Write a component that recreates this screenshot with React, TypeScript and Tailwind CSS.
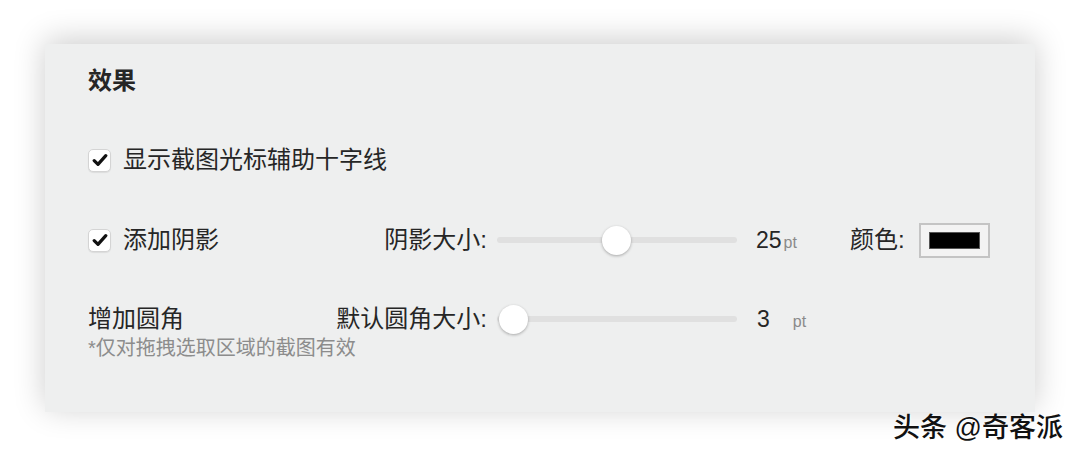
import React from 'react';

const font = { fontFamily: '"Liberation Sans", "Noto Sans CJK SC", sans-serif' };

function Checkbox() {
  return (
    <div className="w-[23px] h-[23px] rounded-[5px] bg-white border border-[#d4d4d4] shadow-[0_1px_1px_rgba(0,0,0,0.08)] flex items-center justify-center">
      <svg width="16" height="14" viewBox="0 0 16 14" fill="none">
        <path d="M2.2 7.6 L6 11.4 L13.8 2.6" stroke="#111" strokeWidth="3.2" strokeLinecap="round" strokeLinejoin="round" />
      </svg>
    </div>
  );
}

function Slider({ pos }: { pos: number }) {
  return (
    <div className="relative w-[240px] h-[28px] flex items-center">
      <div className="w-full h-[6px] rounded-full bg-[#e0e0e0]" />
      <div
        className="absolute top-0 w-[29px] h-[29px] -ml-[14px] rounded-full bg-white shadow-[0_1px_3px_rgba(0,0,0,0.3)]"
        style={{ left: pos }}
      />
    </div>
  );
}

export default function App() {
  return (
    <div className="relative w-[1080px] h-[458px] bg-white pt-[44px] pl-[45px] overflow-hidden whitespace-nowrap" style={font}>
      <div className="w-[990px] h-[368px] bg-[#eeefef] shadow-[0_-4px_30px_rgba(0,0,0,0.2)] pl-[43px] pt-[22px] text-[#262626]">
        <div className="h-[30px] leading-[30px] text-[24px] font-bold">效果</div>

        <div className="mt-[49px] h-[30px] flex items-center">
          <Checkbox />
          <span className="ml-[12px] text-[24px] leading-[30px]">显示截图光标辅助十字线</span>
        </div>

        <div className="mt-[50px] h-[30px] flex items-center">
          <div className="w-[230px] flex items-center">
            <Checkbox />
            <span className="ml-[12px] text-[24px] leading-[30px]">添加阴影</span>
          </div>
          <div className="w-[169px] text-right text-[24px] leading-[30px]">阴影大小:</div>
          <div className="ml-[10px]">
            <Slider pos={119} />
          </div>
          <div className="ml-[19px] w-[94px] flex items-baseline">
            <span className="text-[23px] leading-[30px]">25</span>
            <span className="ml-[2px] text-[16px] text-[#8a8a8a]">pt</span>
          </div>
          <span className="text-[24px] leading-[30px]">颜色:</span>
          <div className="ml-[14px] w-[71px] h-[35px] border-2 border-[#c4c4c4] bg-[#f3f3f3] flex items-center justify-center">
            <div className="w-[51px] h-[17px] bg-black border border-[#555]" />
          </div>
        </div>

        <div className="mt-[49px] h-[30px] flex items-center">
          <div className="w-[230px] text-[24px] leading-[30px]">增加圆角</div>
          <div className="w-[169px] text-right text-[24px] leading-[30px]">默认圆角大小:</div>
          <div className="ml-[10px]">
            <Slider pos={16} />
          </div>
          <div className="ml-[20px] flex items-baseline">
            <span className="text-[23px] leading-[30px]">3</span>
            <span className="ml-[23px] text-[16px] text-[#8a8a8a]">pt</span>
          </div>
        </div>

        <div className="mt-[3px] text-[20px] leading-[22px] text-[#8c8c8c]">*仅对拖拽选取区域的截图有效</div>
      </div>

      <div className="absolute left-[893px] top-[411px] text-[27px] leading-[34px] font-medium text-[#111] [text-shadow:0_0_2px_#fff,1px_1px_1px_#fff]">
        头条 @奇客派
      </div>
    </div>
  );
}
